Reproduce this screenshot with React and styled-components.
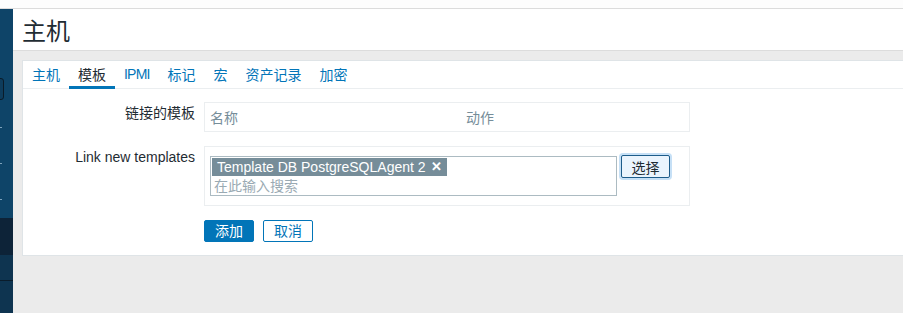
import React from 'react'
import styled, { createGlobalStyle } from 'styled-components'

const Global = createGlobalStyle`
html, body {
  margin: 0;
  padding: 0;
  background: #ebebeb;
  font-family: "Liberation Sans", Arial, "Noto Sans CJK SC", sans-serif;
  font-size: 14px;
  color: #1f2c33;
  overflow: hidden;
}
`;

const TopStrip = styled.div`
height: 8px;
background: #fdfdfd;
border-bottom: 1px solid #dcdcdc;
`;

const Layout = styled.div`
display: flex;
height: 304px;
`;

const Sidebar = styled.div`
width: 13px;
flex-shrink: 0;
display: flex;
flex-direction: column;
background: #0e4468;
overflow: hidden;
`;

const SideSearch = styled.div`
margin: 69px 0 0 -40px;
width: 42px;
height: 20px;
border: 1px solid #0a1b29;
border-radius: 3px;
background: #0e3c5c;
flex-shrink: 0;
`;

const SideTick = styled.div`
margin-top: ${p => p.gap}px;
width: 2px;
height: 1px;
background: #7ea3bc;
flex-shrink: 0;
`;

const SideBand = styled.div`
margin-top: ${p => p.gap || 0}px;
height: ${p => p.h}px;
background: ${p => p.bg};
border-bottom: ${p => p.line ? '1px solid #0a1c2b' : 'none'};
flex-shrink: 0;
`;

const Main = styled.div`
flex: 1;
display: flex;
flex-direction: column;
min-width: 0;
`;

const Header = styled.div`
height: 41px;
background: #fff;
border-bottom: 1px solid #dcdcdc;
display: flex;
align-items: center;
padding-left: 9px;
`;

const Title = styled.h1`
margin: 0;
font-size: 24px;
font-weight: normal;
color: #1f2c33;
font-family: "Noto Sans CJK SC", sans-serif;
line-height: 1;
`;

const Body = styled.div`
padding: 9px 0 0 9px;
`;

const Card = styled.div`
background: #fff;
border: 1px solid #dfe4e7;
border-right: none;
padding-bottom: 13px;
`;

const TabBar = styled.div`
display: flex;
height: 27px;
border-bottom: 1px solid #ebeef0;
`;

const Tab = styled.div`
display: flex;
align-items: center;
box-sizing: border-box;
height: 28px;
padding: 1px 9px 0;
margin-bottom: -1px;
letter-spacing: ${p => p.latin ? '-0.8px' : '0'};
color: ${p => p.active ? '#1f2c33' : '#0275b8'};
border-bottom: 3px solid ${p => p.active ? '#0275b8' : 'transparent'};
`;

const Form = styled.div`
padding-top: 13px;
display: flex;
flex-direction: column;
gap: 14px;
`;

const Row = styled.div`
display: flex;
gap: 9px;
`;

const Label = styled.div`
width: 172px;
text-align: right;
padding-top: ${p => p.top}px;
flex-shrink: 0;
line-height: 16px;
`;

const LinkedTable = styled.div`
width: 484px;
height: 28px;
border: 1px solid #ebeef0;
display: flex;
align-items: center;
color: #768d99;
`;

const Col = styled.div`
box-sizing: border-box;
width: ${p => p.w}px;
padding-left: 5px;
`;

const Separator = styled.div`
width: 479px;
padding: 9px 0 9px 5px;
border: 1px solid #ebeef0;
display: flex;
align-items: flex-start;
gap: 4px;
`;

const MultiSelect = styled.div`
width: 403px;
height: 38px;
border: 1px solid #acbbc2;
padding: 0 1px;
display: flex;
flex-direction: column;
`;

const Tag = styled.div`
align-self: flex-start;
margin-top: 1px;
background: #768d99;
color: #fff;
height: 18px;
line-height: 18px;
padding: 0 5px;
display: flex;
align-items: center;
gap: 5px;
`;

const Remove = styled.span`
font-weight: bold;
font-size: 13px;
`;

const Placeholder = styled.div`
padding-left: 2px;
color: #9aaab3;
line-height: 18px;
margin-top: 1px;
`;

const SelectButton = styled.button`
margin-top: -1px;
width: 49px;
height: 23px;
background: #eaf4fd;
border: 1px solid #1d5c8a;
border-radius: 2px;
box-shadow: 0 0 0 2px #c6e0f6;
font: inherit;
color: #1f2c33;
padding: 0;
`;

const Actions = styled.div`
display: flex;
gap: 9px;
margin-left: 181px;
`;

const Button = styled.button`
width: 50px;
height: 22px;
border-radius: 2px;
border: 1px solid #0275b8;
background: ${p => p.primary ? '#0275b8' : '#fff'};
color: ${p => p.primary ? '#fff' : '#0275b8'};
font: inherit;
padding: 0;
line-height: 18px;
`;

const tabs = ['主机', '模板', 'IPMI', '标记', '宏', '资产记录', '加密']

export default function App() {
  return (
    <>
      <Global />
      <TopStrip />
      <Layout>
        <Sidebar>
          <SideSearch />
          <SideTick gap={27} />
          <SideTick gap={35} />
          <SideTick gap={35} />
          <SideBand gap={18} h={37} bg="#0d2338" />
          <SideBand h={25} bg="#0e3450" line />
          <SideBand h={40} bg="#0e3450" />
        </Sidebar>
        <Main>
          <Header>
            <Title>主机</Title>
          </Header>
          <Body>
            <Card>
              <TabBar>
                {tabs.map((t, i) => (
                  <Tab key={t} active={i === 1} latin={t === 'IPMI'}>{t}</Tab>
                ))}
              </TabBar>
              <Form>
                <Row>
                  <Label top={3}>链接的模板</Label>
                  <LinkedTable>
                    <Col w={256}>名称</Col>
                    <Col w={200}>动作</Col>
                  </LinkedTable>
                </Row>
                <Row>
                  <Label top={3}>Link new templates</Label>
                  <Separator>
                    <MultiSelect>
                      <Tag>Template DB PostgreSQLAgent 2<Remove>✕</Remove></Tag>
                      <Placeholder>在此输入搜索</Placeholder>
                    </MultiSelect>
                    <SelectButton>选择</SelectButton>
                  </Separator>
                </Row>
                <Actions>
                  <Button primary>添加</Button>
                  <Button>取消</Button>
                </Actions>
              </Form>
            </Card>
          </Body>
        </Main>
      </Layout>
    </>
  )
}
